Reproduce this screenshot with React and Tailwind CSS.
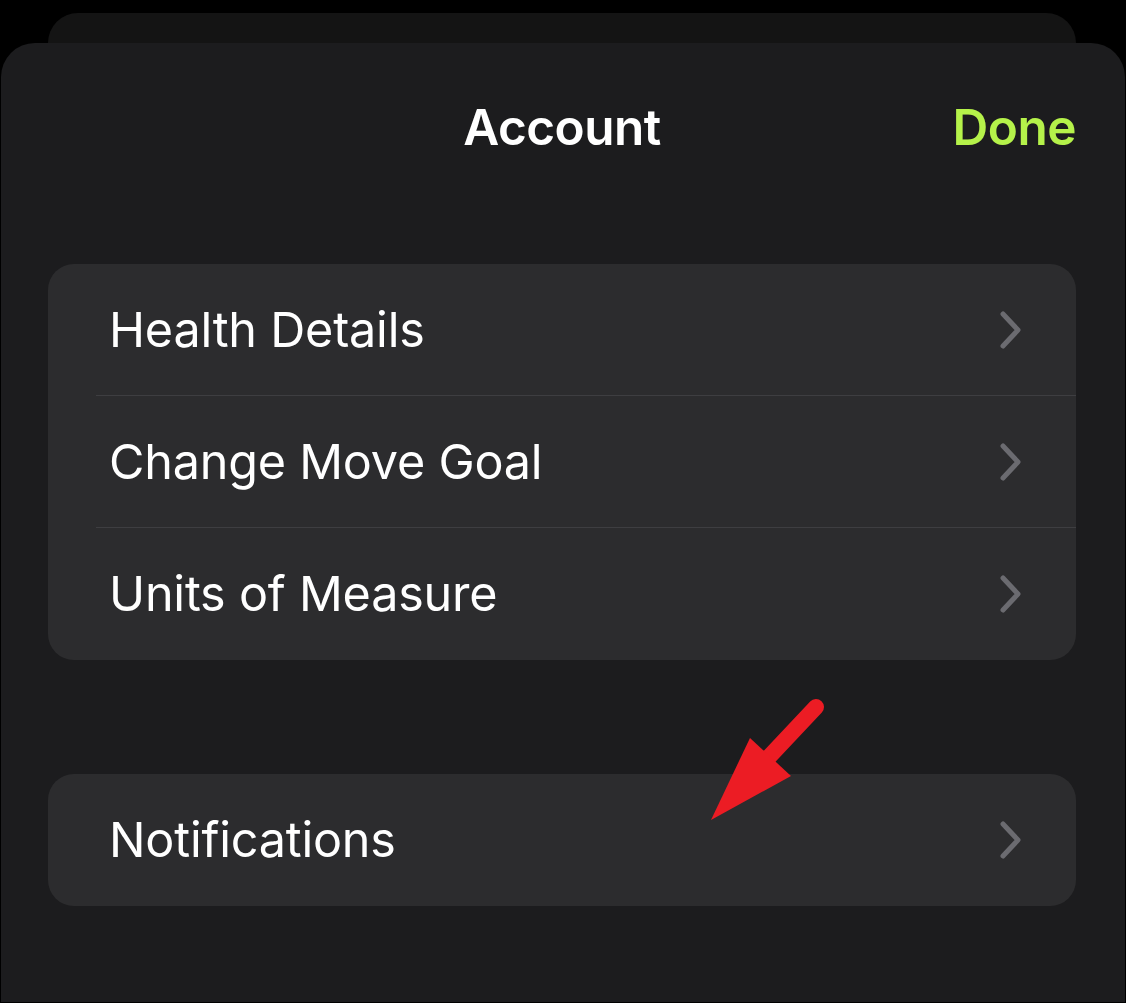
import React from "react";

const Chevron = () => (
  <svg width="26" height="40" viewBox="0 0 26 40" className="shrink-0">
    <path d="M5 4 L20 20 L5 36" fill="none" stroke="#6b6b70" strokeWidth="5" strokeLinecap="round" strokeLinejoin="round" />
  </svg>
);

const Row = ({ label, divider }) => (
  <div className="relative h-[132px] flex items-center pl-[61px] pr-[52px]">
    <span className="flex-1 text-white text-[48.5px] leading-none tracking-[-0.2px]">{label}</span>
    <Chevron />
    {divider && <div className="absolute left-[48px] right-0 bottom-0 h-px bg-[#3e3e41]" />}
  </div>
);

export default function App() {
  return (
    <div className="relative w-[1126px] h-[1003px] bg-black overflow-hidden" style={{ fontFamily: "Inter, 'Liberation Sans', sans-serif" }}>
      <div className="ml-[48px] mr-[50px] mt-[13px] h-[60px] rounded-t-[30px] bg-[#141414]" />
      <div className="-mt-[30px] mx-[1px] h-[959px] rounded-t-[34px] bg-[#1c1c1e] pl-[47px] pr-[49px]">
        <div className="relative h-[168px] flex items-center justify-center">
          <span className="text-white text-[49.5px] font-semibold tracking-[-0.5px]">Account</span>
          <span className="absolute right-0 text-[#b5f24a] text-[49.5px] font-semibold tracking-[-0.5px]">Done</span>
        </div>
        <div className="mt-[53px] rounded-[26px] bg-[#2c2c2e] overflow-hidden">
          <Row label="Health Details" divider />
          <Row label="Change Move Goal" divider />
          <Row label="Units of Measure" />
        </div>
        <div className="mt-[114px] rounded-[26px] bg-[#2c2c2e] overflow-hidden">
          <Row label="Notifications" />
        </div>
      </div>
      <svg className="absolute left-0 top-0 pointer-events-none" width="1126" height="1003">
        <line x1="816" y1="707" x2="768" y2="758" stroke="#ec1c24" strokeWidth="16" strokeLinecap="round" />
        <polygon points="750,738 791,776 711,820" fill="#ec1c24" />
      </svg>
    </div>
  );
}
